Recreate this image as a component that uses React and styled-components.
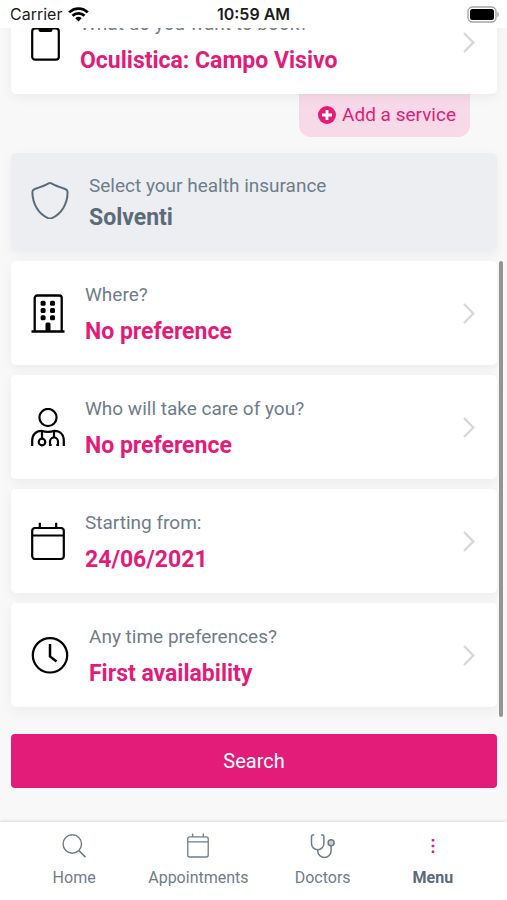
import React from 'react'
import styled, { createGlobalStyle } from 'styled-components'

const colors = {
  accent: '#e31c79',
  accentLight: '#f7d9e7',
  text: '#6f7d8b',
  textDark: '#5b6b7a',
  page: '#f8f8f8',
  muted: '#eceef2',
  chevron: '#d8d8da'
}

const GlobalStyle = createGlobalStyle`
  *, *::before, *::after {
    box-sizing: border-box;
  }
  body {
    margin: 0;
    font-family: Roboto, sans-serif;
    background: ${colors.page};
  }
  svg {
    display: block;
    flex: none;
  }
`

const Screen = styled.div`
  display: flex;
  flex-direction: column;
  height: 100vh;
`

const StatusBar = styled.header`
  display: grid;
  grid-template-columns: 1fr auto 1fr;
  align-items: center;
  flex: none;
  height: 28px;
  padding: 0 8px;
  background: #fff;
  color: #1c1c1e;
  font-family: Inter, sans-serif;
  font-size: 16px;
  line-height: 28px;
`

const Carrier = styled.div`
  display: flex;
  align-items: center;
  gap: 6px;
  padding-left: 2px;
`

const Clock = styled.time`
  font-weight: 600;
`

const Battery = styled.div`
  justify-self: end;
`

/* content is scrolled to its end, so it hangs from the bottom edge */
const Main = styled.main`
  position: relative;
  display: flex;
  flex-direction: column;
  justify-content: flex-end;
  flex: 1;
  min-height: 0;
  overflow: hidden;
  padding: 0 10px 34px 11px;
`

const ScrollThumb = styled.div`
  position: absolute;
  top: 233px;
  right: 4px;
  bottom: 105px;
  width: 4px;
  border-radius: 2px;
  background: #949494;
`

const Cards = styled.div`
  display: flex;
  flex-direction: column;
  gap: 10px;
  margin-bottom: 27px;
`

const CardElement = styled.button`
  position: relative;
  display: flex;
  align-items: center;
  gap: 20px;
  flex: none;
  width: 100%;
  padding: 16px 22px 14px 20px;
  border: 0;
  border-radius: 5px;
  background: #fff;
  box-shadow: 0 4px 12px rgba(0, 0, 0, .05);
  color: #000;
  font-family: inherit;
  text-align: left;
  cursor: pointer;
`

const MutedCard = styled(CardElement)`
  padding-top: 15px;
  padding-bottom: 19px;
  background: ${colors.muted};
  color: ${colors.textDark};
  cursor: default;
`

const CardText = styled.span`
  display: flex;
  flex-direction: column;
  flex: 1;
`

const Label = styled.span`
  color: ${colors.text};
  font-size: 19px;
  line-height: 36px;
`

const Value = styled.span`
  color: ${props => props.$muted ? colors.textDark : colors.accent};
  font-size: 23px;
  font-weight: 700;
  line-height: ${props => props.$muted ? 28 : 38}px;
`

const ServiceGroup = styled.div`
  display: flex;
  flex-direction: column;
  align-items: flex-end;
  margin-bottom: 6px;
`

const AddService = styled.button`
  display: flex;
  align-items: center;
  gap: 6px;
  height: 43px;
  margin-right: 27px;
  padding: 0 14px 2px 19px;
  border: 0;
  border-radius: 0 0 12px 12px;
  background: ${colors.accentLight};
  color: ${colors.accent};
  font-family: inherit;
  font-size: 19px;
  line-height: 24px;
  cursor: pointer;
`

const SearchButton = styled.button`
  flex: none;
  height: 54px;
  border: 0;
  border-radius: 4px;
  background: ${colors.accent};
  color: #fff;
  font-family: inherit;
  font-size: 20px;
  cursor: pointer;
`

const TabBar = styled.nav`
  position: relative;
  display: grid;
  grid-template-columns: 124fr 124fr 124fr 96fr;
  flex: none;
  padding: 10px 26px 10px 12px;
  background: #fff;
  box-shadow: 0 -1px 3px rgba(0, 0, 0, .12);
`

const Tab = styled.a`
  display: flex;
  flex-direction: column;
  align-items: center;
  gap: 6px;
  color: ${props => props.$active ? colors.textDark : colors.text};
  font-size: 16px;
  font-weight: ${props => props.$active ? 700 : 400};
  line-height: 24px;
  text-decoration: none;
`

const WifiIcon = () => (
  <svg width="21" height="15" viewBox="0 0 21 15" fill="none" stroke="#000" strokeWidth="2.7">
    <path d="M1.2 5.4a13.2 13.2 0 0 1 18.6 0" />
    <path d="M4.5 8.8a8.5 8.5 0 0 1 12 0" />
    <path d="M7.3 11.2a4.7 4.7 0 0 1 6.4 0L10.5 14.5Z" fill="#000" stroke="none" />
  </svg>
)

const BatteryIcon = () => (
  <svg width="32" height="17" viewBox="0 0 32 17">
    <rect x="1" y="1" width="28" height="15" rx="4.5" fill="#fff" stroke="#a5a5a5" strokeWidth="1.4" />
    <rect x="3" y="3" width="24" height="11" rx="2.5" fill="#000" />
    <path d="M30.3 6v5c2-.6 2-4.4 0-5Z" fill="#a5a5a5" />
  </svg>
)

const PhoneIcon = () => (
  <svg width="29" height="40" viewBox="0 0 29 40" fill="none" stroke="currentColor" strokeWidth="2.2">
    <rect x="1.2" y="5.5" width="26.6" height="31.2" rx="3" />
    <path d="M7.5 5.5h14v1.5a2 2 0 0 1-2 2h-10a2 2 0 0 1-2-2Z" fill="currentColor" stroke="none" />
  </svg>
)

const ShieldIcon = () => (
  <svg width="38" height="38" viewBox="0 0 38 38" fill="none" stroke="currentColor" strokeWidth="2" strokeLinejoin="round">
    <path d="M17.6 2.4Q19 1.6 20.4 2.4C24.5 4.8 29 6.3 34.6 8.2Q36.6 9 36.6 11C36.5 23 30.5 33 20.8 37.200Q19 37.800 17.200 37.200C7.500 33 1.500 23 1.400 11Q1.400 9 3.400 8.200C9 6.300 13.500 4.800 17.600 2.400Z" />
  </svg>
)

const BuildingIcon = () => (
  <svg width="34" height="40" viewBox="0 0 34 40" fill="currentColor">
    <path d="M3.7 37.500V4a2.500 2.500 0 0 1 2.500-2.500h22a2.500 2.500 0 0 1 2.500 2.500V37.500M.5 37.500h33" fill="none" stroke="currentColor" strokeWidth="2.3" />
    {[6.8, 14, 21.2].map(y => (
      <React.Fragment key={y}>
        <rect x="9.6" y={y} width="5" height="5" rx="1.5" />
        <rect x="19" y={y} width="5" height="5" rx="1.5" />
      </React.Fragment>
    ))}
    <path d="M14.5 37.5V30a1.5 1.5 0 0 1 1.5-1.5h2a1.5 1.5 0 0 1 1.5 1.5v7.500Z" />
  </svg>
)

const DoctorIcon = () => (
  <svg width="34" height="40" viewBox="0 0 34 40" fill="none" stroke="currentColor" strokeWidth="2.2">
    <circle cx="17" cy="9.5" r="8.6" />
    <path d="M1.2 38V32.5C1.2 26.5 5 22.800 10.500 22.800C14.500 24.200 19.500 24.200 23.500 22.800C29 22.800 32.800 26.500 32.800 32.500V38" />
    <path d="M11 23v7.500M23 23v6" />
    <circle cx="11" cy="34" r="3.3" />
    <path d="M20.7 37H19v-3.500a4 4 0 0 1 8 0V37h-1.700" />
  </svg>
)

const CalendarIcon = ({ width = 34, height = 40, stroke = 2.2 }) => (
  <svg width={width} height={height} viewBox="0 0 34 40" fill="none" stroke="currentColor" strokeWidth={stroke}>
    <rect x="1.2" y="6" width="31.6" height="31" rx="3" />
    <path d="M1.2 13.5h31.6M8.8 .8V6M25.200 .8V6" />
  </svg>
)

const ClockIcon = () => (
  <svg width="38" height="38" viewBox="0 0 38 38" fill="none" stroke="currentColor" strokeWidth="2.2">
    <circle cx="19" cy="18.3" r="17.2" />
    <path d="M19 7v12.500l6.500 5" strokeWidth="2.5" />
  </svg>
)

const Chevron = () => (
  <svg width="12" height="22" viewBox="0 0 12 22" fill="none" stroke={colors.chevron} strokeWidth="2.4">
    <path d="M1 1 10.3 10.5 1 20" />
  </svg>
)

const PlusIcon = () => (
  <svg width="18" height="18" viewBox="0 0 18 18">
    <circle cx="9" cy="9" r="9" fill={colors.accent} />
    <path d="M9 4v10M4 9h10" stroke="#fff" strokeWidth="2.8" />
  </svg>
)

const SearchIcon = () => (
  <svg width="26" height="28" viewBox="0 0 26 28" fill="none" stroke="currentColor" strokeWidth="1.4">
    <circle cx="11.3" cy="12" r="9.2" />
    <path d="M17.8 18.5 24.5 25.2" strokeWidth="1.7" />
  </svg>
)

const StethoscopeIcon = () => (
  <svg width="26" height="28" viewBox="0 0 26 28" fill="none" stroke="currentColor" strokeWidth="1.5">
    <path d="M4.2 3H3Q1.5 3 1.5 4.5V11.5a6.2 6.2 0 0 0 12.4 0V4.5Q13.9 3 12.4 3H11.2" />
    <path d="M7.7 17.7v1a6.7 6.7 0 0 0 13.4 0V14" />
    <circle cx="21.1" cy="10.8" r="3" fill="#c9ced4" />
  </svg>
)

const DotsIcon = () => (
  <svg width="26" height="28" viewBox="0 0 26 28" fill={colors.accent}>
    <rect x="11.7" y="7" width="2.6" height="2.6" rx=".6" />
    <rect x="11.7" y="12.7" width="2.6" height="2.6" rx=".6" />
    <rect x="11.7" y="18.4" width="2.6" height="2.6" rx=".6" />
  </svg>
)

const Card = ({ icon, label, value }) => (
  <CardElement type="button">
    {icon}
    <CardText>
      <Label>{label}</Label>
      <Value>{value}</Value>
    </CardText>
    <Chevron />
  </CardElement>
)

function App () {
  return (
    <Screen>
      <GlobalStyle />
      <StatusBar>
        <Carrier>
          Carrier
          <WifiIcon />
        </Carrier>
        <Clock>10:59 AM</Clock>
        <Battery>
          <BatteryIcon />
        </Battery>
      </StatusBar>

      <Main>
        <Cards>
          <ServiceGroup>
            <Card
              icon={<PhoneIcon />}
              label="What do you want to book?"
              value="Oculistica: Campo Visivo"
            />
            <AddService type="button">
              <PlusIcon />
              Add a service
            </AddService>
          </ServiceGroup>
          <MutedCard type="button" disabled>
            <ShieldIcon />
            <CardText>
              <Label>Select your health insurance</Label>
              <Value $muted>Solventi</Value>
            </CardText>
          </MutedCard>
          <Card icon={<BuildingIcon />} label="Where?" value="No preference" />
          <Card icon={<DoctorIcon />} label="Who will take care of you?" value="No preference" />
          <Card icon={<CalendarIcon />} label="Starting from:" value="24/06/2021" />
          <Card icon={<ClockIcon />} label="Any time preferences?" value="First availability" />
        </Cards>
        <SearchButton type="submit">Search</SearchButton>
        <ScrollThumb />
      </Main>

      <TabBar>
        <Tab href="#home">
          <SearchIcon />
          Home
        </Tab>
        <Tab href="#appointments">
          <CalendarIcon width={22} height={28} stroke={2} />
          Appointments
        </Tab>
        <Tab href="#doctors">
          <StethoscopeIcon />
          Doctors
        </Tab>
        <Tab href="#menu" $active>
          <DotsIcon />
          Menu
        </Tab>
      </TabBar>
    </Screen>
  )
}

export default App
